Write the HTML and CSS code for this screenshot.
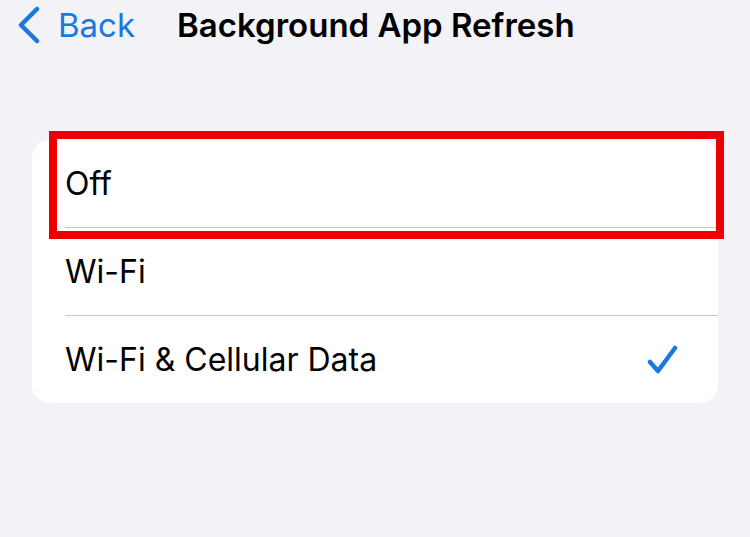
FILE: index.html
```html
<!DOCTYPE html>
<html lang="en">
<head>
    <title>Background App Refresh</title>
    <meta charset="UTF-8">
    <link rel="stylesheet" href="styles.css">
</head>
<body>
<div class="navbar">
    <a class="back" href="#">
        <svg class="chevron" width="26" height="38" viewBox="0 0 26 38">
            <path d="M21 3 L5 19 L21 35" fill="none" stroke="currentColor" stroke-width="4.5" stroke-linecap="round" stroke-linejoin="round"/>
        </svg>
        <span>Back</span>
    </a>
    <h1 class="title">Background App Refresh</h1>
</div>

<!-- options list -->
<div class="card">
    <div class="row"><div class="row-inner">Off</div></div>
    <div class="row"><div class="row-inner">Wi-Fi</div></div>
    <div class="row"><div class="row-inner last">Wi-Fi &amp; Cellular Data
        <svg class="check" width="32" height="30" viewBox="0 0 32 30">
            <path d="M4 17 L12 26 L29 3" fill="none" stroke="currentColor" stroke-width="4.5" stroke-linecap="round" stroke-linejoin="round"/>
        </svg>
    </div></div>
    <div class="highlight"></div>
</div>
</body>
</html>
```

FILE: styles.css
```css
body { margin: 0; background: #f2f2f7; font-family: Inter, "Noto Sans", sans-serif; color: #000; width: 750px; height: 537px; overflow: hidden; }
.navbar { display: flex; align-items: center; height: 50px; padding-left: 16px; }
.back { display: flex; align-items: center; color: #1a78de; text-decoration: none; font-size: 33px; }
.chevron { margin-right: 16px; }
.title { margin: 0 0 0 42px; font-size: 33px; font-weight: 600; letter-spacing: 0; }
.card { position: relative; margin: 90px 0 0 32px; width: 686px; background: #fff; border-radius: 18px; }
.row { padding-left: 33px; }
.row-inner { height: 87px; display: flex; align-items: center; justify-content: space-between; font-size: 32px; border-bottom: 1px solid #c8c8cc; padding-right: 40px; }
.row-inner.last { border-bottom: none; }
.check { color: #1a78de; }
.highlight { position: absolute; left: 17px; top: -9px; width: 659px; height: 92px; border: 8px solid #ee0000; }
```
